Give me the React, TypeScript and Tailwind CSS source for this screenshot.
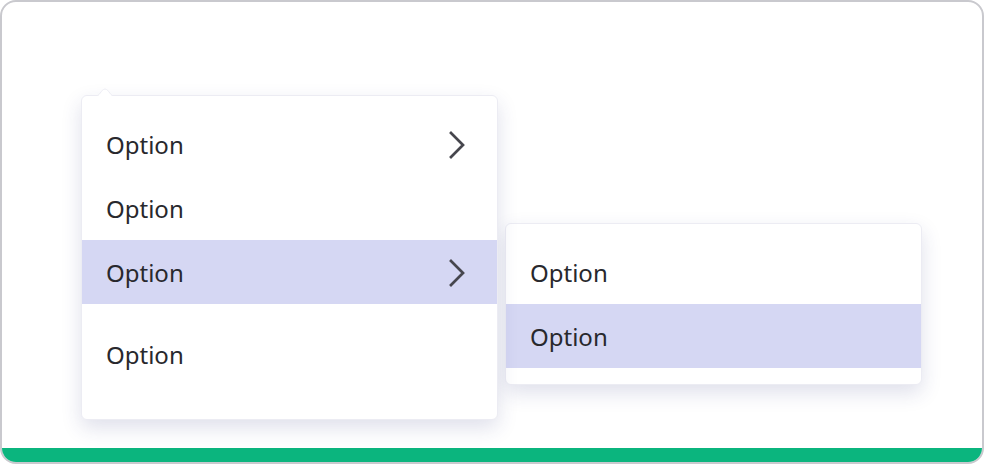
import React from "react";

const Chevron = () => (
  <svg width="16" height="28" viewBox="0 0 16 28" fill="none" className="shrink-0 translate-y-[1px]">
    <path d="M2 2 L14 14 L2 26" stroke="#46464d" strokeWidth="2.7" strokeLinecap="square" strokeLinejoin="miter" />
  </svg>
);

const Item = ({ label, active, sub }: { label: string; active?: boolean; sub?: boolean }) => (
  <div
    className={`h-[64px] flex items-center justify-between pl-[24px] pr-[32px] text-[24px] text-[#28282d] ${
      active ? "bg-[#d5d7f3]" : ""
    }`}
  >
    <span className="leading-none translate-y-[1px]">{label}</span>
    {sub && <Chevron />}
  </div>
);

export default function App() {
  return (
    <div
      className="w-[984px] h-[464px] bg-white"
      style={{ fontFamily: '"Noto Sans", "Open Sans", sans-serif' }}
    >
      <div className="w-full h-full rounded-[16px] border-2 border-[#c9c9ce] overflow-hidden flex flex-col">
        <div className="flex-1 flex items-start pl-[79px] pt-[93px] gap-[7px]">
          <div className="relative w-[417px] bg-white rounded-[6px] border border-[#ececf3] shadow-[0_8px_20px_rgba(40,50,120,0.15)] pt-[16px] pb-[33px]">
            <svg
              className="absolute left-[12px] top-[-8px]"
              width="22"
              height="9"
              viewBox="0 0 22 9"
            >
              <path d="M0 9 C6 9 7 1 11 1 C15 1 16 9 22 9 Z" fill="#ffffff" stroke="#ececf3" strokeWidth="1" />
              <rect x="0" y="8" width="22" height="2" fill="#ffffff" />
            </svg>
            <Item label="Option" sub />
            <Item label="Option" />
            <Item label="Option" active sub />
            <div className="h-[18px]" />
            <Item label="Option" />
          </div>
          <div className="mt-[128px] w-[417px] bg-white rounded-[6px] border border-[#ececf3] shadow-[0_8px_20px_rgba(40,50,120,0.15)] py-[16px] overflow-hidden">
            <Item label="Option" />
            <Item label="Option" active />
          </div>
        </div>
        <div className="h-[14px] bg-[#0bb57e] shrink-0" />
      </div>
    </div>
  );
}
